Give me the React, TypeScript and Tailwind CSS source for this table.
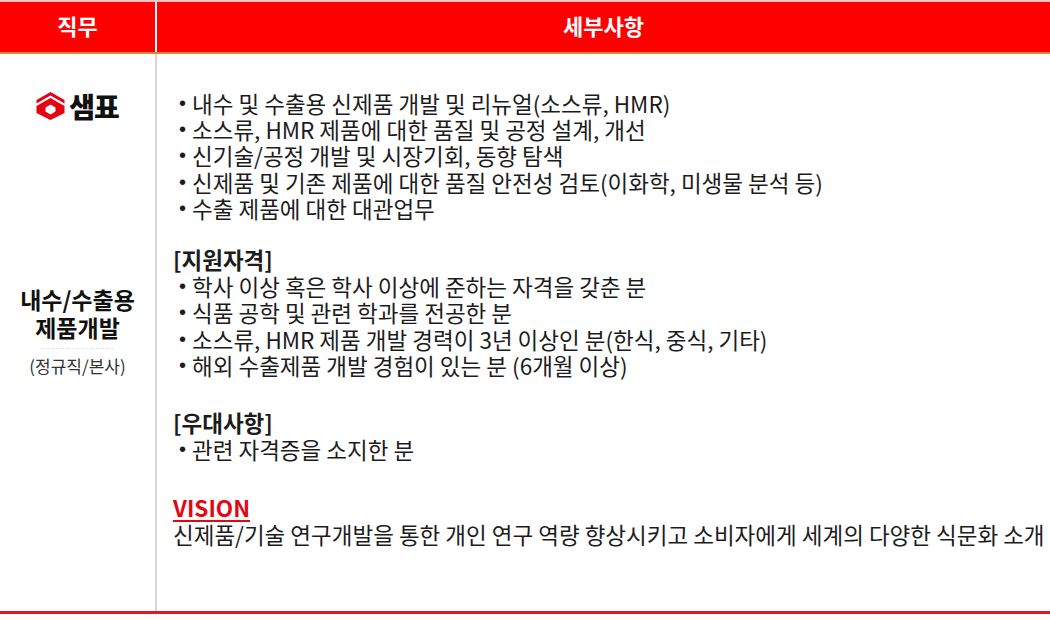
const DUTIES = [
    "내수 및 수출용 신제품 개발 및 리뉴얼(소스류, HMR)",
    "소스류, HMR 제품에 대한 품질 및 공정 설계, 개선",
    "신기술/공정 개발 및 시장기회, 동향 탐색",
    "신제품 및 기존 제품에 대한 품질 안전성 검토(이화학, 미생물 분석 등)",
    "수출 제품에 대한 대관업무",
];

const QUALIFICATIONS = [
    "학사 이상 혹은 학사 이상에 준하는 자격을 갖춘 분",
    "식품 공학 및 관련 학과를 전공한 분",
    "소스류, HMR 제품 개발 경력이 3년 이상인 분(한식, 중식, 기타)",
    "해외 수출제품 개발 경험이 있는 분 (6개월 이상)",
];

const PREFERRED = ["관련 자격증을 소지한 분"];

function BulletList({ items }: { items: string[] }) {
    return (
        <ul>
            {items.map((item) => (
                <li key={item} className="flex h-[26.2px] items-center leading-[26px]">
                    <span className="w-[19px] shrink-0 pl-[6px] font-['Liberation_Sans',sans-serif] text-[20px]">•</span>
                    <span className="whitespace-nowrap">{item}</span>
                </li>
            ))}
        </ul>
    );
}

function SempioLogo() {
    return (
        <div className="flex items-center gap-[4px]">
            <svg width="29" height="28" viewBox="0 0 28 28">
                <polygon points="14,0 28,8 28,11.5 14,3.5 0,11.5 0,8" fill="#e60012" />
                <path
                    d="M0 14 L14 6 L28 14 L28 21 L14 28 L0 21 Z M14 12.5 L19 15.5 L19 19.5 L14 22.5 L9 19.5 L9 15.5 Z"
                    fill="#e60012"
                    fillRule="evenodd"
                />
            </svg>
            <span className="text-[28px] font-black leading-none tracking-[-1px] text-[#111]">샘표</span>
        </div>
    );
}

export default function App() {
    return (
        <div className="h-[620px] w-[1050px] bg-white font-['Noto_Sans_CJK_KR',sans-serif] text-[#1c1c1c]">
            <div className="flex h-[54px] border-t-2 border-b-2 border-t-[#f5c4c4] border-b-[#cf8a34] bg-[#ff0000] text-[22px] font-bold text-white">
                <div className="flex w-[155px] items-center justify-center pb-[3px]">직무</div>
                <div className="w-[2px] bg-white" />
                <div className="flex flex-1 items-center justify-center pb-[3px]">세부사항</div>
            </div>

            <div className="flex h-[557px]">
                <div className="flex w-[155px] flex-col items-center pt-[38px]">
                    <SempioLogo />
                    <div className="mt-[165px] text-center text-[23px] font-bold leading-[28px] text-[#111]">
                        <p>내수/수출용</p>
                        <p>제품개발</p>
                    </div>
                    <div className="mt-[7px] w-[73px] border-t border-dashed border-[#e4e4e4]" />
                    <p className="mt-[6px] text-[17px] leading-[22px] text-[#333]">(정규직/본사)</p>
                </div>
                <div className="w-[2px] bg-[#d6d6d6]" />
                <div className="flex-1 pl-[16px] pt-[36px] text-[22.5px]">
                    <BulletList items={DUTIES} />

                    <p className="mt-[26px] flex h-[26.2px] items-center font-bold">[지원자격]</p>
                    <BulletList items={QUALIFICATIONS} />

                    <p className="mt-[32px] flex h-[26.2px] items-center font-bold">[우대사항]</p>
                    <BulletList items={PREFERRED} />

                    <p className="mt-[33px] flex h-[26.2px] items-center font-bold text-[#e30613] underline underline-offset-[3px]">
                        VISION
                    </p>
                    <p className="flex h-[26.2px] items-center whitespace-nowrap">
                        신제품/기술 연구개발을 통한 개인 연구 역량 향상시키고 소비자에게 세계의 다양한 식문화 소개
                    </p>
                </div>
            </div>

            <div className="h-[3px] bg-[#e41a1a]" />
        </div>
    );
}
